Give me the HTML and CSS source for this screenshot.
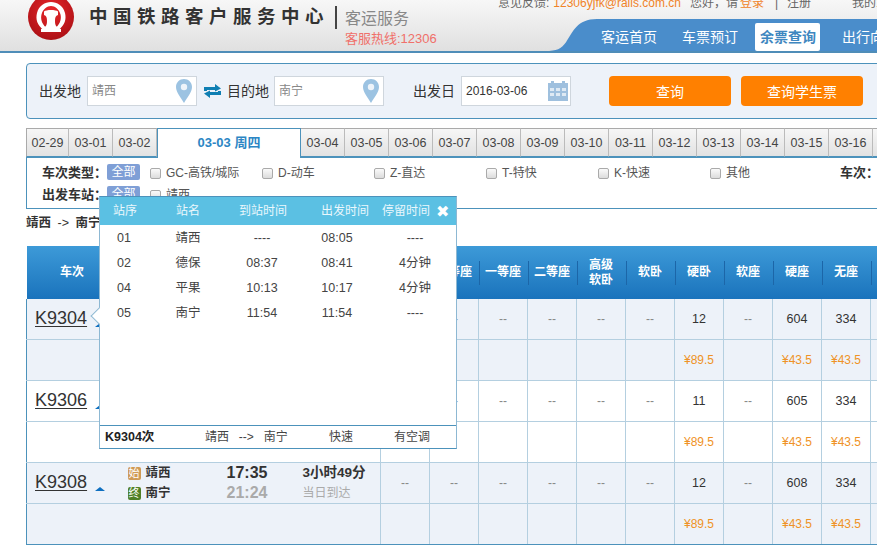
FILE: index.html
```html
<!DOCTYPE html>
<html lang="zh-CN">
<head>
<meta charset="utf-8">
<title>余票查询</title>
<link rel="stylesheet" href="styles.css">
</head>
<body>
<header class="site-header">
  <svg class="logo" viewBox="0 0 46 46" width="46" height="46">
    <defs><radialGradient id="lg" cx="50%" cy="35%" r="70%"><stop offset="0" stop-color="#e8272b"/><stop offset="1" stop-color="#a80f14"/></radialGradient></defs>
    <circle cx="23" cy="23" r="23" fill="url(#lg)"/>
    <path d="M15.5 36 C9 31 7.5 25 9 19 C11 11.5 17 8 23 8 C29 8 35 11.5 37 19 C38.500 25 37 31 30.500 36 L28 33.500 C32.500 29.500 33.500 24.500 32.500 20.500 C31 15 27 12 23 12 C19 12 15 15 13.500 20.500 C12.500 24.500 13.500 29.500 18 33.500 Z" fill="#fff"/>
    <path d="M16 17.500 C18 15.500 28 15.500 30 17.500 L30 21 C27.500 22 27 23.500 27 27 C27 31 28 33.500 33 35 L33 38 L13 38 L13 35 C18 33.500 19 31 19 27 C19 23.500 18.500 22 16 21 Z" fill="#fff"/>
  </svg>
  <div class="brand-name">中国铁路客户服务中心</div>
  <div class="brand-side">
    <div class="brand-service">客运服务</div>
    <div class="brand-hotline">客服热线:12306</div>
  </div>
  <div class="header-right">
    <div class="top-links"><span>意见反馈:</span><a class="link-orange link-mail">12306yjfk@rails.com.cn</a><span class="greet">您好，请</span><a class="link-orange link-login">登录</a><span class="bar">|</span><span class="reg">注册</span><span class="my-link">我的12306</span></div>
    <nav class="main-nav">
      <svg class="nav-curve" viewBox="0 0 52 33" width="52" height="32" preserveAspectRatio="none"><path d="M0 33 C12 33 16 31 21 24 C28 13 32 0 52 0 L52 33 Z" fill="#4a8dcb"/></svg>
      <div class="nav-items">
        <a class="nav-item">客运首页</a>
        <a class="nav-item">车票预订</a>
        <a class="nav-item nav-active">余票查询</a>
        <a class="nav-item">出行向导</a>
      </div>
    </nav>
  </div>
</header>

<main class="content">
  <section class="search-panel">
    <label class="field-label label-from">出发地</label>
    <div class="field">
      <span class="field-text">靖西</span>
      <svg class="pin" viewBox="0 0 16 24" width="16" height="24"><path d="M8 0 C3.500 0 0 3.500 0 8 C0 13 5 19 8 24 C11 19 16 13 16 8 C16 3.500 12.500 0 8 0 Z" fill="#9cc3e2"/><circle cx="8" cy="8" r="3.200" fill="#eef4fa"/></svg>
    </div>
    <svg class="swap" viewBox="0 0 17 14" width="17" height="14"><path d="M0 7 V3 H11 V0 L17 4.500 L11 7.500 V6 H3 V7 Z M17 7 V11 H6 V14 L0 9.500 L6 6.500 V8 H14 V7 Z" fill="#0f7fb3"/></svg>
    <label class="field-label label-to">目的地</label>
    <div class="field">
      <span class="field-text">南宁</span>
      <svg class="pin" viewBox="0 0 16 24" width="16" height="24"><path d="M8 0 C3.500 0 0 3.500 0 8 C0 13 5 19 8 24 C11 19 16 13 16 8 C16 3.500 12.500 0 8 0 Z" fill="#9cc3e2"/><circle cx="8" cy="8" r="3.200" fill="#eef4fa"/></svg>
    </div>
    <label class="field-label label-date">出发日</label>
    <div class="field">
      <span class="field-date">2016-03-06</span>
      <svg class="calendar" viewBox="0 0 20 20" width="20" height="20"><path d="M0 2 H3 V0 H6 V2 H14 V0 H17 V2 H20 V20 H0 Z" fill="#9fc0de"/><path d="M2 7 H6 V10 H2 Z M8 7 H12 V10 H8 Z M14 7 H18 V10 H14 Z M2 12 H6 V15 H2 Z M8 12 H12 V15 H8 Z M14 12 H18 V15 H14 Z" fill="#dfeaf4"/></svg>
    </div>
    <button class="btn btn-query">查询</button>
    <button class="btn">查询学生票</button>
  </section>

  <div class="date-tabs">
    <a class="tab">02-29</a><a class="tab">03-01</a><a class="tab">03-02</a><a class="tab tab-active">03-03 周四</a><a class="tab">03-04</a><a class="tab">03-05</a><a class="tab">03-06</a><a class="tab">03-07</a><a class="tab">03-08</a><a class="tab">03-09</a><a class="tab">03-10</a><a class="tab">03-11</a><a class="tab">03-12</a><a class="tab">03-13</a><a class="tab">03-14</a><a class="tab">03-15</a><a class="tab">03-16</a><a class="tab"></a>
  </div>

  <section class="filters">
    <div class="filter-row">
      <span class="filter-name">车次类型：</span>
      <span class="filter-all">全部</span>
      <span class="check"><i class="box"></i>GC-高铁/城际</span>
      <span class="check"><i class="box"></i>D-动车</span>
      <span class="check"><i class="box"></i>Z-直达</span>
      <span class="check"><i class="box"></i>T-特快</span>
      <span class="check"><i class="box"></i>K-快速</span>
      <span class="check check-last"><i class="box"></i>其他</span>
      <span class="filter-name">车次：</span>
    </div>
    <div class="filter-row">
      <span class="filter-name">出发车站：</span>
      <span class="filter-all">全部</span>
      <span class="check"><i class="box"></i>靖西</span>
    </div>
  </section>

  <div class="route-line">靖西 <span class="route-arrow">-&gt;</span> 南宁</div>

  <table class="trains">
    <colgroup>
      <col class="c-train"><col class="c-station"><col class="c-time"><col class="c-dur">
      <col class="c-seat"><col class="c-seat"><col class="c-seat"><col class="c-seat"><col class="c-seat"><col class="c-seat"><col class="c-seat"><col class="c-seat"><col class="c-seat"><col class="c-seat"><col class="c-seat">
    </colgroup>
    <thead>
      <tr>
        <th>车次</th><th></th><th></th><th></th>
        <th class="sep"></th><th class="sep">特等座</th><th class="sep">一等座</th><th class="sep">二等座</th><th class="sep">高级<br>软卧</th><th class="sep">软卧</th><th class="sep">硬卧</th><th class="sep">软座</th><th class="sep">硬座</th><th class="sep">无座</th><th class="sep"></th>
      </tr>
    </thead>
    <tbody>
      <tr class="shade">
        <td class="train-cell"><a class="train-no">K9304</a><i class="tri"></i></td>
        <td class="st-cell"></td>
        <td class="time-cell"></td>
        <td class="dur-cell"></td>
        <td></td><td>--</td><td>--</td><td>--</td><td>--</td><td>--</td><td class="num">12</td><td>--</td><td class="num">604</td><td class="num">334</td><td></td>
      </tr>
      <tr class="shade price">
        <td colspan="4"></td>
        <td></td><td></td><td></td><td></td><td></td><td></td><td>¥89.5</td><td></td><td>¥43.5</td><td>¥43.5</td><td></td>
      </tr>
      <tr>
        <td class="train-cell"><a class="train-no">K9306</a><i class="tri"></i></td>
        <td class="st-cell"></td>
        <td class="time-cell"></td>
        <td class="dur-cell"></td>
        <td></td><td>--</td><td>--</td><td>--</td><td>--</td><td>--</td><td class="num">11</td><td>--</td><td class="num">605</td><td class="num">334</td><td></td>
      </tr>
      <tr class="price">
        <td colspan="4"></td>
        <td></td><td></td><td></td><td></td><td></td><td></td><td>¥89.5</td><td></td><td>¥43.5</td><td>¥43.5</td><td></td>
      </tr>
      <tr class="shade">
        <td class="train-cell"><a class="train-no">K9308</a><i class="tri"></i></td>
        <td class="st-cell"><div class="st"><i class="badge b-start">始</i>靖西</div><div class="st"><i class="badge b-end">终</i>南宁</div></td>
        <td class="time-cell"><b>17:35</b><span>21:24</span></td>
        <td class="dur-cell"><b>3小时49分</b><span>当日到达</span></td>
        <td>--</td><td>--</td><td>--</td><td>--</td><td>--</td><td>--</td><td class="num">12</td><td>--</td><td class="num">608</td><td class="num">334</td><td></td>
      </tr>
      <tr class="shade price">
        <td colspan="4"></td>
        <td></td><td></td><td></td><td></td><td></td><td></td><td>¥89.5</td><td></td><td>¥43.5</td><td>¥43.5</td><td></td>
      </tr>
    </tbody>
  </table>

  <aside class="stops">
    <i class="stops-arrow"></i>
    <div class="stops-head">
      <span>站序</span><span>站名</span><span>到站时间</span><span>出发时间</span><span>停留时间</span><span class="stops-close">✖</span>
    </div>
    <div class="stops-body">
      <div class="stop"><span>01</span><span>靖西</span><span>----</span><span>08:05</span><span>----</span></div>
      <div class="stop"><span>02</span><span>德保</span><span>08:37</span><span>08:41</span><span>4分钟</span></div>
      <div class="stop"><span>04</span><span>平果</span><span>10:13</span><span>10:17</span><span>4分钟</span></div>
      <div class="stop"><span>05</span><span>南宁</span><span>11:54</span><span>11:54</span><span>----</span></div>
    </div>
    <div class="stops-foot">
      <b>K9304次</b><span class="foot-route">靖西 --&gt; 南宁</span><span>快速</span><span>有空调</span>
    </div>
  </aside>
</main>
</body>
</html>
```

FILE: styles.css
```css
html, body {
  margin: 0;
  padding: 0;
  height: 546px;
  overflow: hidden;
  background: #fff;
}
body {
  width: 877px;
  font: 12px/1.2 "Liberation Sans", "Noto Sans CJK SC", sans-serif;
  color: #333;
}
a { color: inherit; text-decoration: none; }
i { font-style: normal; }

/* header */
.site-header {
  height: 51px;
  border-bottom: 2px solid #4f8db8;
  background: linear-gradient(#f7f7f7, #e0e0e0);
  display: flex;
  overflow: hidden;
}
.logo {
  flex: none;
  margin: -6px 15px 0 28px;
}
.brand-name {
  flex: none;
  width: 248px;
  margin-top: 5px;
  font-size: 18.500px;
  line-height: 24px;
  font-weight: 700;
  letter-spacing: 5.500px;
  color: #333;
  white-space: nowrap;
  height: 24px;
}
.brand-side {
  flex: none;
  width: 110px;
  margin-top: 6px;
  border-left: 2px solid #444;
  height: 23px;
  margin-left: -2px;
  padding-left: 8px;
}
.brand-service {
  margin-top: 3px;
  font-size: 16px;
  line-height: 20px;
  color: #888;
  white-space: nowrap;
}
.brand-hotline {
  margin-top: 3px;
  font-size: 13px;
  line-height: 14px;
  color: #f0706a;
  white-space: nowrap;
}
.header-right {
  flex: none;
  width: 379px;
  margin-left: 43px;
  display: flex;
  flex-direction: column;
}
.top-links {
  height: 17px;
  margin-top: -4px;
  line-height: 14px;
  color: #666;
  white-space: nowrap;
}
.link-orange { color: #f08328; }
.link-mail { margin-left: 4px; }
.greet { margin-left: 9px; }
.link-login { margin-left: 2px; }
.bar { margin-left: 11px; }
.reg { margin-left: 9px; }
.my-link { margin-left: 41px; }
.main-nav {
  margin-top: 6px;
  height: 32px;
  display: flex;
  align-items: stretch;
}
.nav-curve { flex: none; margin-left: 47px; }
.nav-items {
  flex: 1;
  background: #4a8dcb;
  display: flex;
  align-items: flex-start;
  padding: 4px 0 0 4px;
  white-space: nowrap;
}
.nav-item {
  flex: none;
  height: 28px;
  line-height: 28px;
  font-size: 14px;
  color: #fff;
  margin-right: 25px;
}
.nav-active {
  background: #fff;
  color: #3f87c0;
  font-weight: 700;
  padding: 0 4px 0 5px;
  width: 56px;
  border-radius: 2px;
  margin: 0 22px 0 -8px;
}

/* content */
.content {
  position: relative;
  width: 1000px;
  margin-left: 26px;
}

/* search panel */
.search-panel {
  margin-top: 10px;
  height: 54px;
  border: 1px solid #4c92bb;
  border-radius: 4px;
  background: #edf2f9;
  display: flex;
  align-items: center;
  padding-left: 12px;
}
.field-label {
  flex: none;
  font-size: 14px;
  color: #333;
  margin-right: 6px;
}
.label-to { margin-left: 6px; margin-right: 5px; }
.label-date { margin-left: 29px; }
.field {
  flex: none;
  box-sizing: border-box;
  width: 110px;
  height: 30px;
  background: #fff;
  border: 1px solid #cfd6dd;
  display: flex;
  align-items: center;
  justify-content: space-between;
  padding: 0 4px;
}
.field-text { color: #888; font-size: 12px; }
.field-date { color: #333; font-size: 12px; }
.swap { flex: none; margin-left: 7px; }
.calendar { margin-right: -2px; }
.btn {
  flex: none;
  width: 122px;
  height: 30px;
  border: 0;
  border-radius: 4px;
  background: #ff8000;
  color: #fff;
  font: 14px "Liberation Sans", "Noto Sans CJK SC", sans-serif;
  padding: 0;
  margin-left: 10px;
}
.btn-query { margin-left: 38px; }

/* tabs */
.date-tabs {
  margin-top: 9px;
  height: 30px;
  display: flex;
  position: relative;
  z-index: 1;
}
.tab {
  flex: none;
  box-sizing: border-box;
  width: 44px;
  height: 29px;
  line-height: 28px;
  text-align: center;
  font-size: 12.500px;
  color: #444;
  background: linear-gradient(#f6f6f6, #e2e2e2);
  border-top: 1px solid #aaa;
  border-right: 1px solid #bbb;
  border-bottom: 1px solid #4c92bb;
}
.tab:first-child { border-left: 1px solid #aaa; width: 43px; }
.tab-active {
  width: 144px;
  height: 30px;
  background: #fff;
  border: 1px solid #4c92bb;
  border-bottom: 0;
  font-weight: 700;
  font-size: 13px;
  color: #2c86c4;
}

/* filters */
.filters {
  box-sizing: border-box;
  margin-top: -1px;
  height: 52px;
  border: 1px solid #4c92bb;
  padding: 6px 0 0 15px;
}
.filter-row {
  display: flex;
  align-items: center;
  height: 16px;
  margin-bottom: 6px;
  white-space: nowrap;
}
.filter-name {
  flex: none;
  width: 65px;
  padding-top: 2px;
  font-size: 13px;
  font-weight: 700;
  color: #333;
}
.filter-all {
  flex: none;
  width: 33px;
  height: 16px;
  line-height: 16px;
  text-align: center;
  background: #7f9fd6;
  color: #fff;
  border-radius: 2px;
  margin-right: 10px;
}
.check {
  flex: none;
  width: 112px;
  padding-top: 2px;
  display: flex;
  align-items: center;
  color: #555;
}
.check-last { width: 130px; }
.box {
  flex: none;
  box-sizing: border-box;
  width: 11px;
  height: 11px;
  margin-right: 5px;
  border: 1px solid #aaa;
  border-radius: 2px;
  background: linear-gradient(#fafafa, #dcdcdc);
}

.route-line {
  height: 14px;
  margin-top: 7px;
  font-size: 12.500px;
  font-weight: 700;
  color: #333;
  line-height: 14px;
  white-space: nowrap;
}
.route-arrow { font-weight: 400; margin: 0 3px; }

/* table */
.trains {
  margin-top: 16px;
  border-collapse: collapse;
  table-layout: fixed;
  width: 893px;
}
.c-train { width: 91px; }
.c-station { width: 99px; }
.c-time { width: 76px; }
.c-dur { width: 88px; }
.c-seat { width: 49px; }
.trains th {
  height: 53px;
  padding: 0;
  background: linear-gradient(#3d9ad8, #1a73bc);
  color: #fff;
  font-size: 12px;
  line-height: 15px;
  font-weight: 700;
  text-align: center;
}
.trains th.sep {
  background:
    linear-gradient(#1c66a8, #1c66a8) left center / 1px 24px no-repeat,
    linear-gradient(#3d9ad8, #1a73bc);
}
.trains td {
  height: 40px;
  padding: 0;
  border: 1px solid #b4cfe0;
  border-width: 0 1px 1px 1px;
  text-align: center;
  color: #888;
  font-size: 12px;
}
.trains td:first-child { border-left-color: #4c92bb; }
.trains td.num { color: #333; font-size: 12.500px; }
.trains tr:last-child td { border-bottom-color: #4c92bb; }
.trains .shade td { background: #edf2f9; }
.trains .price td { color: #ef9226; }
.trains td.train-cell,
.trains td.st-cell,
.trains td.time-cell,
.trains td.dur-cell { text-align: left; border-right-width: 0; border-left-width: 0; }
.trains td.train-cell { border-left-width: 1px; padding-left: 8px; }
.trains td.st-cell { padding-left: 10px; }
.trains td.time-cell { text-align: center; padding-right: 15px; }
.trains td.dur-cell { padding-left: 10px; }
.train-no {
  font-size: 18px;
  color: #333;
  text-decoration: underline;
  text-underline-offset: 2px;
}
.tri {
  display: inline-block;
  vertical-align: middle;
  margin: 8px 0 0 8px;
  border: 5px solid transparent;
  border-top: 0;
  border-bottom: 4px solid #0e6fc0;
}
.st {
  display: flex;
  align-items: center;
  height: 20px;
  font-weight: 700;
  font-size: 12.500px;
  color: #333;
}
.badge {
  flex: none;
  width: 13px;
  height: 13px;
  line-height: 13px;
  margin-right: 5px;
  border-radius: 2px;
  text-align: center;
  font-size: 11px;
  font-weight: 400;
  color: #fff;
}
.b-start { background: #cf9a55; }
.b-end { background: #4f7f26; }
.time-cell b, .time-cell span {
  display: block;
  font-size: 16px;
  line-height: 20px;
}
.time-cell b { color: #333; }
.time-cell span { color: #aaa; font-weight: 700; }
.dur-cell b, .dur-cell span { display: block; line-height: 20px; }
.dur-cell b { font-size: 13.500px; color: #333; }
.dur-cell span { font-size: 12px; color: #aaa; }

/* stops popup */
.stops {
  position: absolute;
  left: 73px;
  top: 133px;
  box-sizing: border-box;
  width: 358px;
  height: 253px;
  background: #fff;
  border: 1px solid #4c92bb;
  border-left-color: #8db8d3;
  border-right-color: #8db8d3;
  display: flex;
  flex-direction: column;
}
.stops-arrow {
  position: absolute;
  left: -7px;
  top: 113px;
  width: 11px;
  height: 11px;
  background: #fff;
  border-left: 1px solid #8db8d3;
  border-bottom: 1px solid #8db8d3;
  transform: rotate(45deg);
}
.stops-head {
  flex: none;
  height: 28px;
  background: #5bc0e3;
  color: #eaf7fc;
  display: grid;
  grid-template-columns: 63px 63px 82px 61px 55px 1fr;
  align-items: center;
  padding-left: 13px;
}
.stops-close {
  color: #fff;
  margin-left: -1px;
  font: 700 16px "DejaVu Sans", sans-serif;
}
.stops-body {
  flex: 1;
  padding-top: 1px;
}
.stop {
  display: grid;
  grid-template-columns: 48px 80px 68px 82px 74px;
  height: 25px;
  align-items: center;
  text-align: center;
  font-size: 12.500px;
  color: #444;
}
.stops-foot {
  flex: none;
  box-sizing: border-box;
  height: 23px;
  border-top: 1px solid #4c92bb;
  display: grid;
  grid-template-columns: 100px 124px 65px auto;
  align-items: center;
  padding-left: 5px;
  color: #444;
  white-space: nowrap;
}
.stops-foot b { color: #222; font-size: 12.500px; }
.foot-route { word-spacing: 6.500px; }
```
